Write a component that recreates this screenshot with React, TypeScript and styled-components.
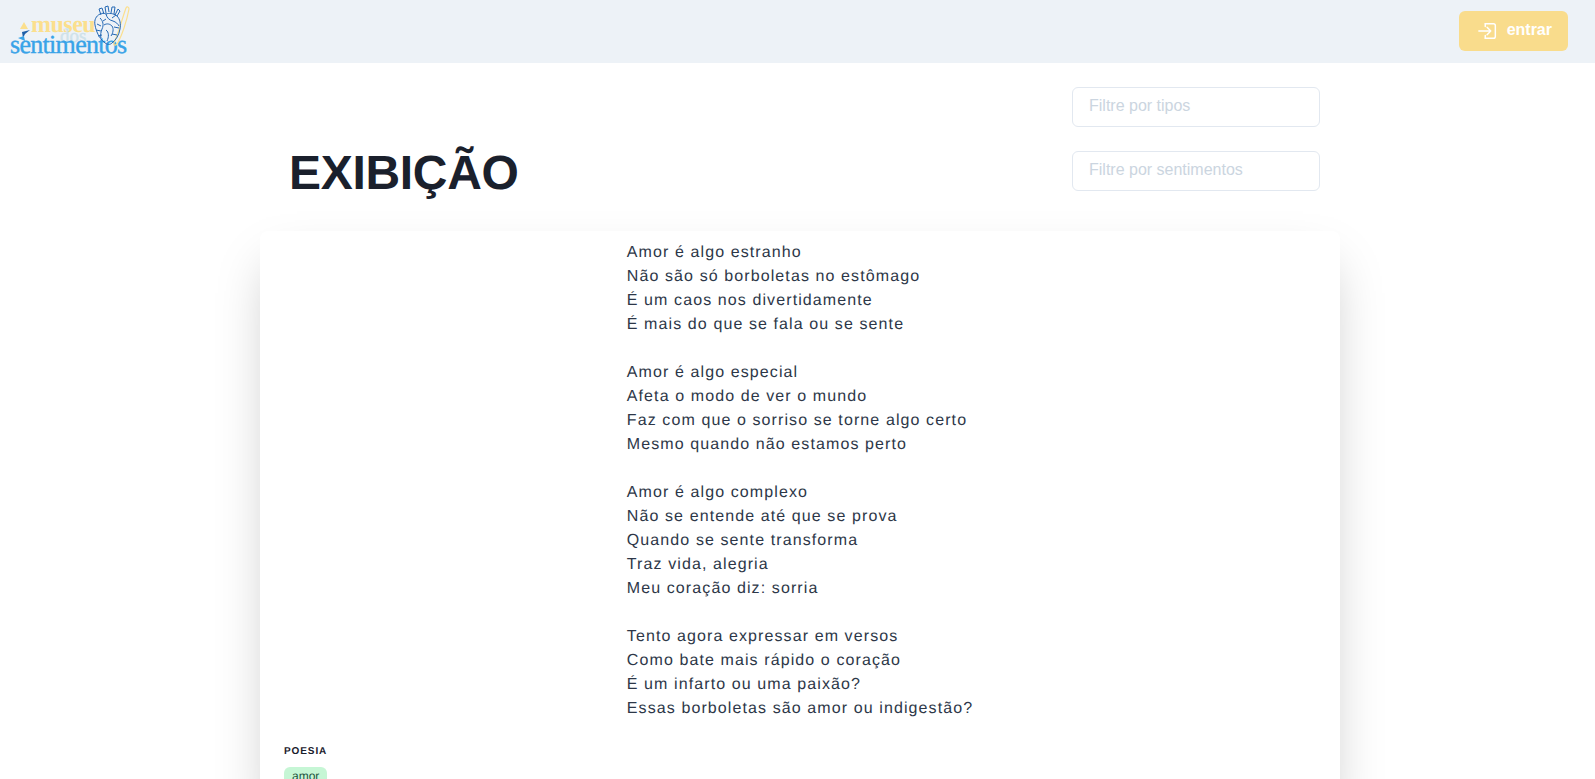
import React from 'react';
import styled, { createGlobalStyle } from 'styled-components';

const GlobalStyle = createGlobalStyle`
  html, body {
    margin: 0;
    padding: 0;
    height: 100%;
    overflow: hidden;
    background: #fff;
    font-family: "Liberation Sans", Arial, sans-serif;
    text-rendering: geometricPrecision;
  }
`;

const Page = styled.div`
  height: 779px;
  overflow: hidden;
`;

const Header = styled.header`
  height: 63px;
  background: #edf2f7;
  display: flex;
  align-items: flex-start;
  justify-content: space-between;
  padding: 0 27px 0 10px;
`;

const Logo = styled.div`
  position: relative;
  width: 122px;
  height: 63px;
`;

const LogoWord = styled.span<{ $x: number; $y: number; $size: number; $color: string; $bold?: boolean; $track?: number }>`
  position: absolute;
  left: ${(p) => p.$x}px;
  top: ${(p) => p.$y}px;
  font-family: "Liberation Serif", serif;
  font-size: ${(p) => p.$size}px;
  font-weight: ${(p) => (p.$bold ? 700 : 400)};
  letter-spacing: ${(p) => p.$track ?? 0}px;
  -webkit-text-stroke: ${(p) => (p.$bold ? 0 : 0.4)}px ${(p) => p.$color};
  line-height: 1;
  color: ${(p) => p.$color};
  white-space: nowrap;
`;

const LogoArt = styled.svg`
  position: absolute;
  left: 0;
  top: 0;
`;

const LoginButton = styled.button`
  width: 109px;
  height: 40px;
  margin-top: 11px;
  border: 0;
  border-radius: 6px;
  background: #f9dc8c;
  color: #fff;
  font-family: inherit;
  font-size: 16px;
  font-weight: 700;
  display: flex;
  align-items: center;
  justify-content: flex-end;
  gap: 8px;
  padding: 0 16px 3px 0;
`;

const LoginIcon = styled.svg`
  margin-top: 3px;
`;

const Main = styled.main`
  width: 1080px;
  margin-left: 260px;
`;

const TopRow = styled.div`
  display: flex;
  justify-content: space-between;
  padding: 24px 20px 0 29px;
  height: 168px;
  box-sizing: border-box;
`;

const Title = styled.h1`
  margin: 0;
  align-self: flex-end;
  padding-bottom: 33px;
  font-size: 48px;
  line-height: 1;
  font-weight: 700;
  letter-spacing: -0.3px;
  color: #1a202c;
`;

const Filters = styled.div`
  display: flex;
  flex-direction: column;
  gap: 24px;
`;

const FilterInput = styled.input`
  width: 248px;
  height: 40px;
  box-sizing: border-box;
  border: 1px solid #e2e8f0;
  border-radius: 6px;
  padding: 0 16px 2px;
  font-family: inherit;
  font-size: 16px;
  background: #fff;

  &::placeholder {
    color: #cbd5e0;
    opacity: 1;
  }
`;

const Card = styled.section`
  border-radius: 8px;
  background: #fff;
  box-shadow: 0 25px 50px -12px rgba(0, 0, 0, 0.25);
  padding: 10px 24px 24px;
`;

const Poem = styled.pre`
  margin: 0 auto;
  width: fit-content;
  font-family: inherit;
  font-size: 16px;
  line-height: 24px;
  letter-spacing: 1.1px;
  color: #2d3748;
`;

const Kind = styled.div`
  margin-top: 23px;
  font-size: 10px;
  line-height: 15px;
  font-weight: 700;
  letter-spacing: 0.9px;
  color: #1a202c;
`;

const Tag = styled.span`
  display: inline-block;
  margin-top: 8px;
  padding: 0 8px;
  border-radius: 6px;
  background: #c6f6d5;
  color: #22543d;
  font-size: 12px;
  line-height: 18px;
`;

const poem = `Amor é algo estranho
Não são só borboletas no estômago
É um caos nos divertidamente
É mais do que se fala ou se sente

Amor é algo especial
Afeta o modo de ver o mundo
Faz com que o sorriso se torne algo certo
Mesmo quando não estamos perto

Amor é algo complexo
Não se entende até que se prova
Quando se sente transforma
Traz vida, alegria
Meu coração diz: sorria

Tento agora expressar em versos
Como bate mais rápido o coração
É um infarto ou uma paixão?
Essas borboletas são amor ou indigestão?`;

export default function App() {
  return (
    <Page>
      <GlobalStyle />
      <Header>
        <Logo>
          <LogoWord $x={21} $y={13} $size={24} $color="#fbdf8d" $bold $track={-0.5}>museu</LogoWord>
          <LogoWord $x={50} $y={27} $size={19} $color="#cfe2ea">dos</LogoWord>
          <LogoWord $x={0} $y={32} $size={26} $color="#38a3e8" $track={-0.7}>sentimentos</LogoWord>
          <LogoArt width="122" height="63" viewBox="0 0 122 63" fill="none">
            <path d="M10 29l4-7 4 7z" fill="#fbdf8d" />
            <path d="M12 32l8-2-5 4-2 4z" fill="#1d5fa8" />
            <path d="M8 38l6-2 1 5z" fill="#38a3e8" />
            <path d="M104 43c4-8 8-24 12-35 1-2 3-1 3 1-2 11-7 27-12 35-2 2-4 1-3-1z" stroke="#fbdf8d" strokeWidth="1.2" />
            <g stroke="#2468b4" strokeWidth="1">
              <path d="M91 15l-2-6 3-1 2 6M96 13l-1-6 3-1 1 6M101 13l1-6 3 0-1 7M105 15l3-6 2 2-3 5" />
              <path d="M90 14c-4 2-6 6-5 11 1 6 4 13 9 17 3 3 6 3 8 1 4-3 7-8 8-14 1-5 0-10-3-13-4-3-8-3-11-2-2-1-4-1-6 0z" />
              <path d="M90 18c3 3 4 7 2 11-1 3-2 6-1 9M96 14c1 4 3 6 7 7 3 1 5 3 6 5M94 25c3-2 6-1 8 1 2 3 1 7-1 10" />
              <path d="M87 24l4 2M86 30l5 1M88 36l4-1M96 30c3 2 3 7 1 11M102 18l4-3M104 27l5 1M102 34l5 1M96 19l-3 2" />
            </g>
          </LogoArt>
        </Logo>
        <LoginButton>
          <LoginIcon width="22" height="22" viewBox="0 0 24 24" fill="none" stroke="currentColor" strokeWidth="1.6" strokeLinecap="round" strokeLinejoin="round">
            <path d="M9 4h9a2 2 0 0 1 2 2v12a2 2 0 0 1-2 2H9" />
            <path d="M2 12h13M11 8l4 4-4 4" />
            <path d="M9 4v3M9 17v3" />
          </LoginIcon>
          entrar
        </LoginButton>
      </Header>
      <Main>
        <TopRow>
          <Title>EXIBIÇÃO</Title>
          <Filters>
            <FilterInput placeholder="Filtre por tipos" />
            <FilterInput placeholder="Filtre por sentimentos" />
          </Filters>
        </TopRow>
        <Card>
          <Poem>{poem}</Poem>
          <Kind>POESIA</Kind>
          <Tag>amor</Tag>
        </Card>
      </Main>
    </Page>
  );
}
